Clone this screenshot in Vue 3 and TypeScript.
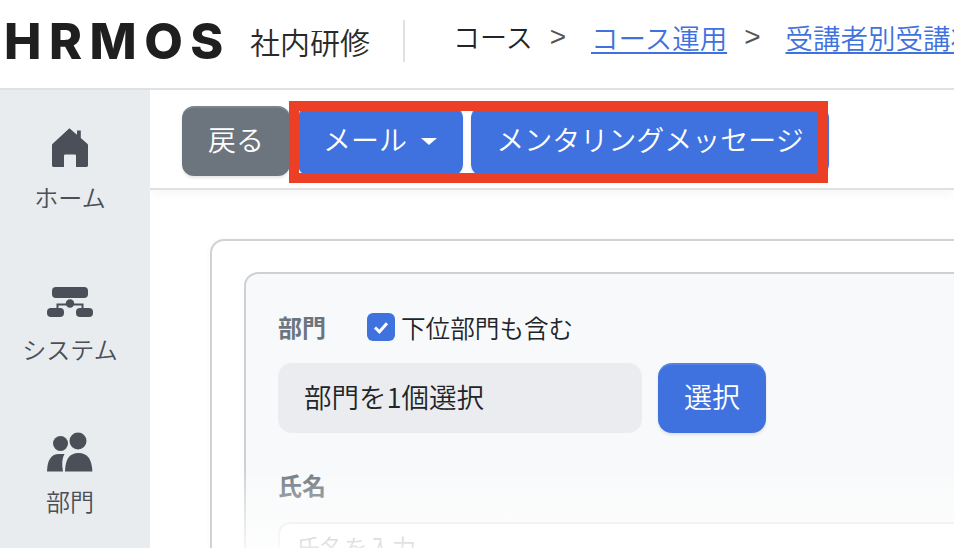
<script setup lang="ts">
// 受講者別受講状況の画面（上部ツールバーに赤枠の注釈つき）
const crumbs = [
  { label: 'コース' },
  { label: 'コース運用', link: true },
  { label: '受講者別受講状況', link: true },
]
</script>

<template>
  <div class="page">
    <header class="top">
      <div class="logo">HRMOS</div>
      <div class="product">社内研修</div>
      <div class="divider"></div>
      <nav class="crumbs">
        <template v-for="(c, i) in crumbs" :key="c.label">
          <span v-if="i > 0" class="sep">&gt;</span>
          <a v-if="c.link" class="crumb-link" href="#">{{ c.label }}</a>
          <span v-else class="crumb">{{ c.label }}</span>
        </template>
      </nav>
    </header>

    <div class="body">
      <aside class="side">
        <div class="side-item">
          <svg class="side-ico" viewBox="0 0 40 40" fill="#4b4f57">
            <path d="M19.4 0.2 L27 6.8 V2.6 H30.8 V10 L37.6 16 Q38 16.4 38 17.2 V37.6 Q38 39 36.6 39 H26 V27.8 Q26 26.6 24.8 26.6 H15.2 Q14 26.6 14 27.8 V39 H3.4 Q2 39 2 37.6 V17.2 Q2 16.4 2.4 16 Z" />
          </svg>
          <span>ホーム</span>
        </div>
        <div class="side-item">
          <svg class="side-ico" viewBox="0 0 40 40" fill="#4b4f57">
            <rect x="2" y="7" width="36" height="11" rx="4" />
            <path d="M6.5 30 V23.5 H33.5 V30 H31.5 V25.5 H8.5 V30 Z" />
            <circle cx="20" cy="23.5" r="4.2" />
            <rect x="-3" y="28" width="17" height="9" rx="4" />
            <rect x="26" y="28" width="17" height="9" rx="4" />
          </svg>
          <span>システム</span>
        </div>
        <div class="side-item">
          <svg class="side-ico" viewBox="0 0 46 40" fill="#4b4f57">
            <circle cx="31" cy="9" r="8.5" />
            <circle cx="13.5" cy="11.5" r="7.5" />
            <path d="M18 39.6 Q18.2 21 31.5 21 Q44.8 21 45.4 39.6 Z" />
            <path d="M0 39.6 Q0.4 22 12 22 H17.5 Q13.8 28 16 39.6 Z" />
          </svg>
          <span>部門</span>
        </div>
      </aside>

      <main class="main">
        <div class="toolbar">
          <button type="button" class="btn gray">戻る</button>
          <button type="button" class="btn blue mail">メール<i class="caret"></i></button>
          <button type="button" class="btn blue mentor">メンタリングメッセージ</button>
          <div class="annotation"></div>
        </div>

        <div class="content">
          <section class="card">
            <div class="panel">
              <div class="label-row">
                <span class="label">部門</span>
                <span class="check">
                  <svg viewBox="0 0 28 28" width="28" height="28">
                    <rect width="28" height="28" rx="6" fill="#3f72de" />
                    <path d="M8 14.5 L12.4 18.8 L20 10.2" fill="none" stroke="#fff" stroke-width="3" />
                  </svg>
                </span>
                <span class="check-text">下位部門も含む</span>
              </div>
              <div class="select-row">
                <div class="select-box">部門を1個選択</div>
                <button type="button" class="btn blue pick">選択</button>
              </div>
              <div class="label name-label">氏名</div>
              <div class="name-input">氏名を入力</div>
            </div>
            <div class="fade"></div>
          </section>
        </div>
      </main>
    </div>
  </div>
</template>

<style>
html, body { margin: 0; background: #fff; overflow: hidden; }
</style>

<style scoped>
.page {
  width: 954px; height: 548px; overflow: hidden; display: flex; flex-direction: column;
  font-family: "Noto Sans CJK JP", "Noto Sans", sans-serif; font-weight: 350; color: #212529; background: #fff;
}
.top {
  height: 82px; flex: none; display: flex; align-items: center; padding-left: 4px; padding-bottom: 6px;
  border-bottom: 2px solid #dee2e6; white-space: nowrap;
}
.logo {
  width: 246px; flex: none; font-family: Inter, sans-serif; font-weight: 800; font-size: 50px;
  letter-spacing: 7.5px; color: #1f1f1f; line-height: 1;
}
.product { width: 121px; flex: none; font-size: 30px; line-height: 1; color: #2a2a2a; }
.divider { width: 2px; height: 42px; margin: 0 50px 0 32px; background: #dee2e6; flex: none; }
.crumbs { display: flex; align-items: center; font-size: 27px; line-height: 40px; margin-top: -8px; margin-left: -2px; }
.crumb { color: #212529; }
.crumb-link { font-size: 27.5px; color: #3f72de; text-decoration: underline; text-underline-offset: 3px; text-decoration-thickness: 2px; }
.sep { color: #555; font-size: 28px; margin: 0 25px 0 17px; font-family: "Liberation Sans", sans-serif; }

.body { flex: 1; display: flex; min-height: 0; }
.side { width: 150px; flex: none; box-sizing: border-box; padding-right: 10px; background: #e9ecef; display: flex; flex-direction: column; }
.side-item {
  height: 152px; flex: none; box-sizing: border-box; padding-top: 38px; display: flex; flex-direction: column;
  align-items: center; font-size: 24px; line-height: 34px; color: #4b4f57;
}
.side-ico { width: 46px; height: 40px; flex: none; margin-bottom: 12px; overflow: visible; }

.main { flex: 1; min-width: 0; overflow: hidden; }
.toolbar {
  height: 98px; padding-left: 32px; display: flex; gap: 8px; align-items: flex-start;
  border-bottom: 2px solid #dee2e6; box-shadow: 0 4px 10px rgba(0,0,0,0.04); position: relative; background: #fff;
}
.btn {
  height: 70px; margin-top: 16px; box-sizing: border-box; border: none; border-radius: 12px; color: #fff;
  font-family: inherit; font-weight: 350; font-size: 28px; line-height: 1; padding: 0 0 4px; white-space: nowrap;
  box-shadow: inset 0 2px 0 rgba(255,255,255,0.12), 0 2px 3px rgba(0,0,0,0.1);
}
.gray { background: #6c757d; width: 108px; }
.blue { background: #3f72de; }
.mail { width: 165px; display: flex; align-items: center; padding-left: 25px; }
.mentor { width: 358px; flex: none; }
.caret {
  margin-left: 14px; margin-top: 4px; width: 0; height: 0;
  border-left: 8.5px solid transparent; border-right: 8.5px solid transparent; border-top: 7px solid #fff;
}
.annotation {
  position: absolute; left: 139px; top: 11px; width: 539px; height: 82px; box-sizing: border-box;
  border: 10px solid #eb4025;
}

.content { padding: 49px 0 0 60px; }
.card {
  position: relative; width: 900px; height: 400px; box-sizing: border-box; padding: 31px 32px; background: #fff;
  border: 2px solid #d0d2d4; border-radius: 14px; box-shadow: 0 2px 8px rgba(0,0,0,0.03);
}
.panel {
  height: 400px; box-sizing: border-box; padding: 34px 32px 0; background: #f8f9fa;
  border: 2px solid #ced0d3; border-radius: 14px;
}
.label-row { display: flex; align-items: center; height: 34px; margin-top: 2px; }
.label { font-size: 24px; line-height: 30px; height: 30px; font-weight: 700; color: #6c757d; }
.check { display: flex; margin-left: 41px; }
.check-text { margin-left: 6px; font-size: 24.6px; line-height: 30px; height: 30px; color: #212529; }
.select-row { display: flex; gap: 16px; margin-top: 19px; }
.select-box {
  width: 364px; height: 70px; box-sizing: border-box; padding: 0 0 4px 26px; display: flex; align-items: center;
  background: #ebecef; border-radius: 14px; font-size: 27.5px;
}
.pick { width: 108px; margin-top: 0; border-radius: 14px; }
.name-label { margin-top: 37px; }
.name-input {
  margin-top: 22px; height: 70px; box-sizing: border-box; padding: 5px 16px; background: #fff;
  border: 2px solid #e3e5e8; border-radius: 12px; font-size: 24px; color: #8d9298;
}
.fade {
  position: absolute; left: 0; right: 0; top: 225px; height: 90px;
  background: linear-gradient(rgba(255,255,255,0), rgba(255,255,255,0.85));
}
</style>
